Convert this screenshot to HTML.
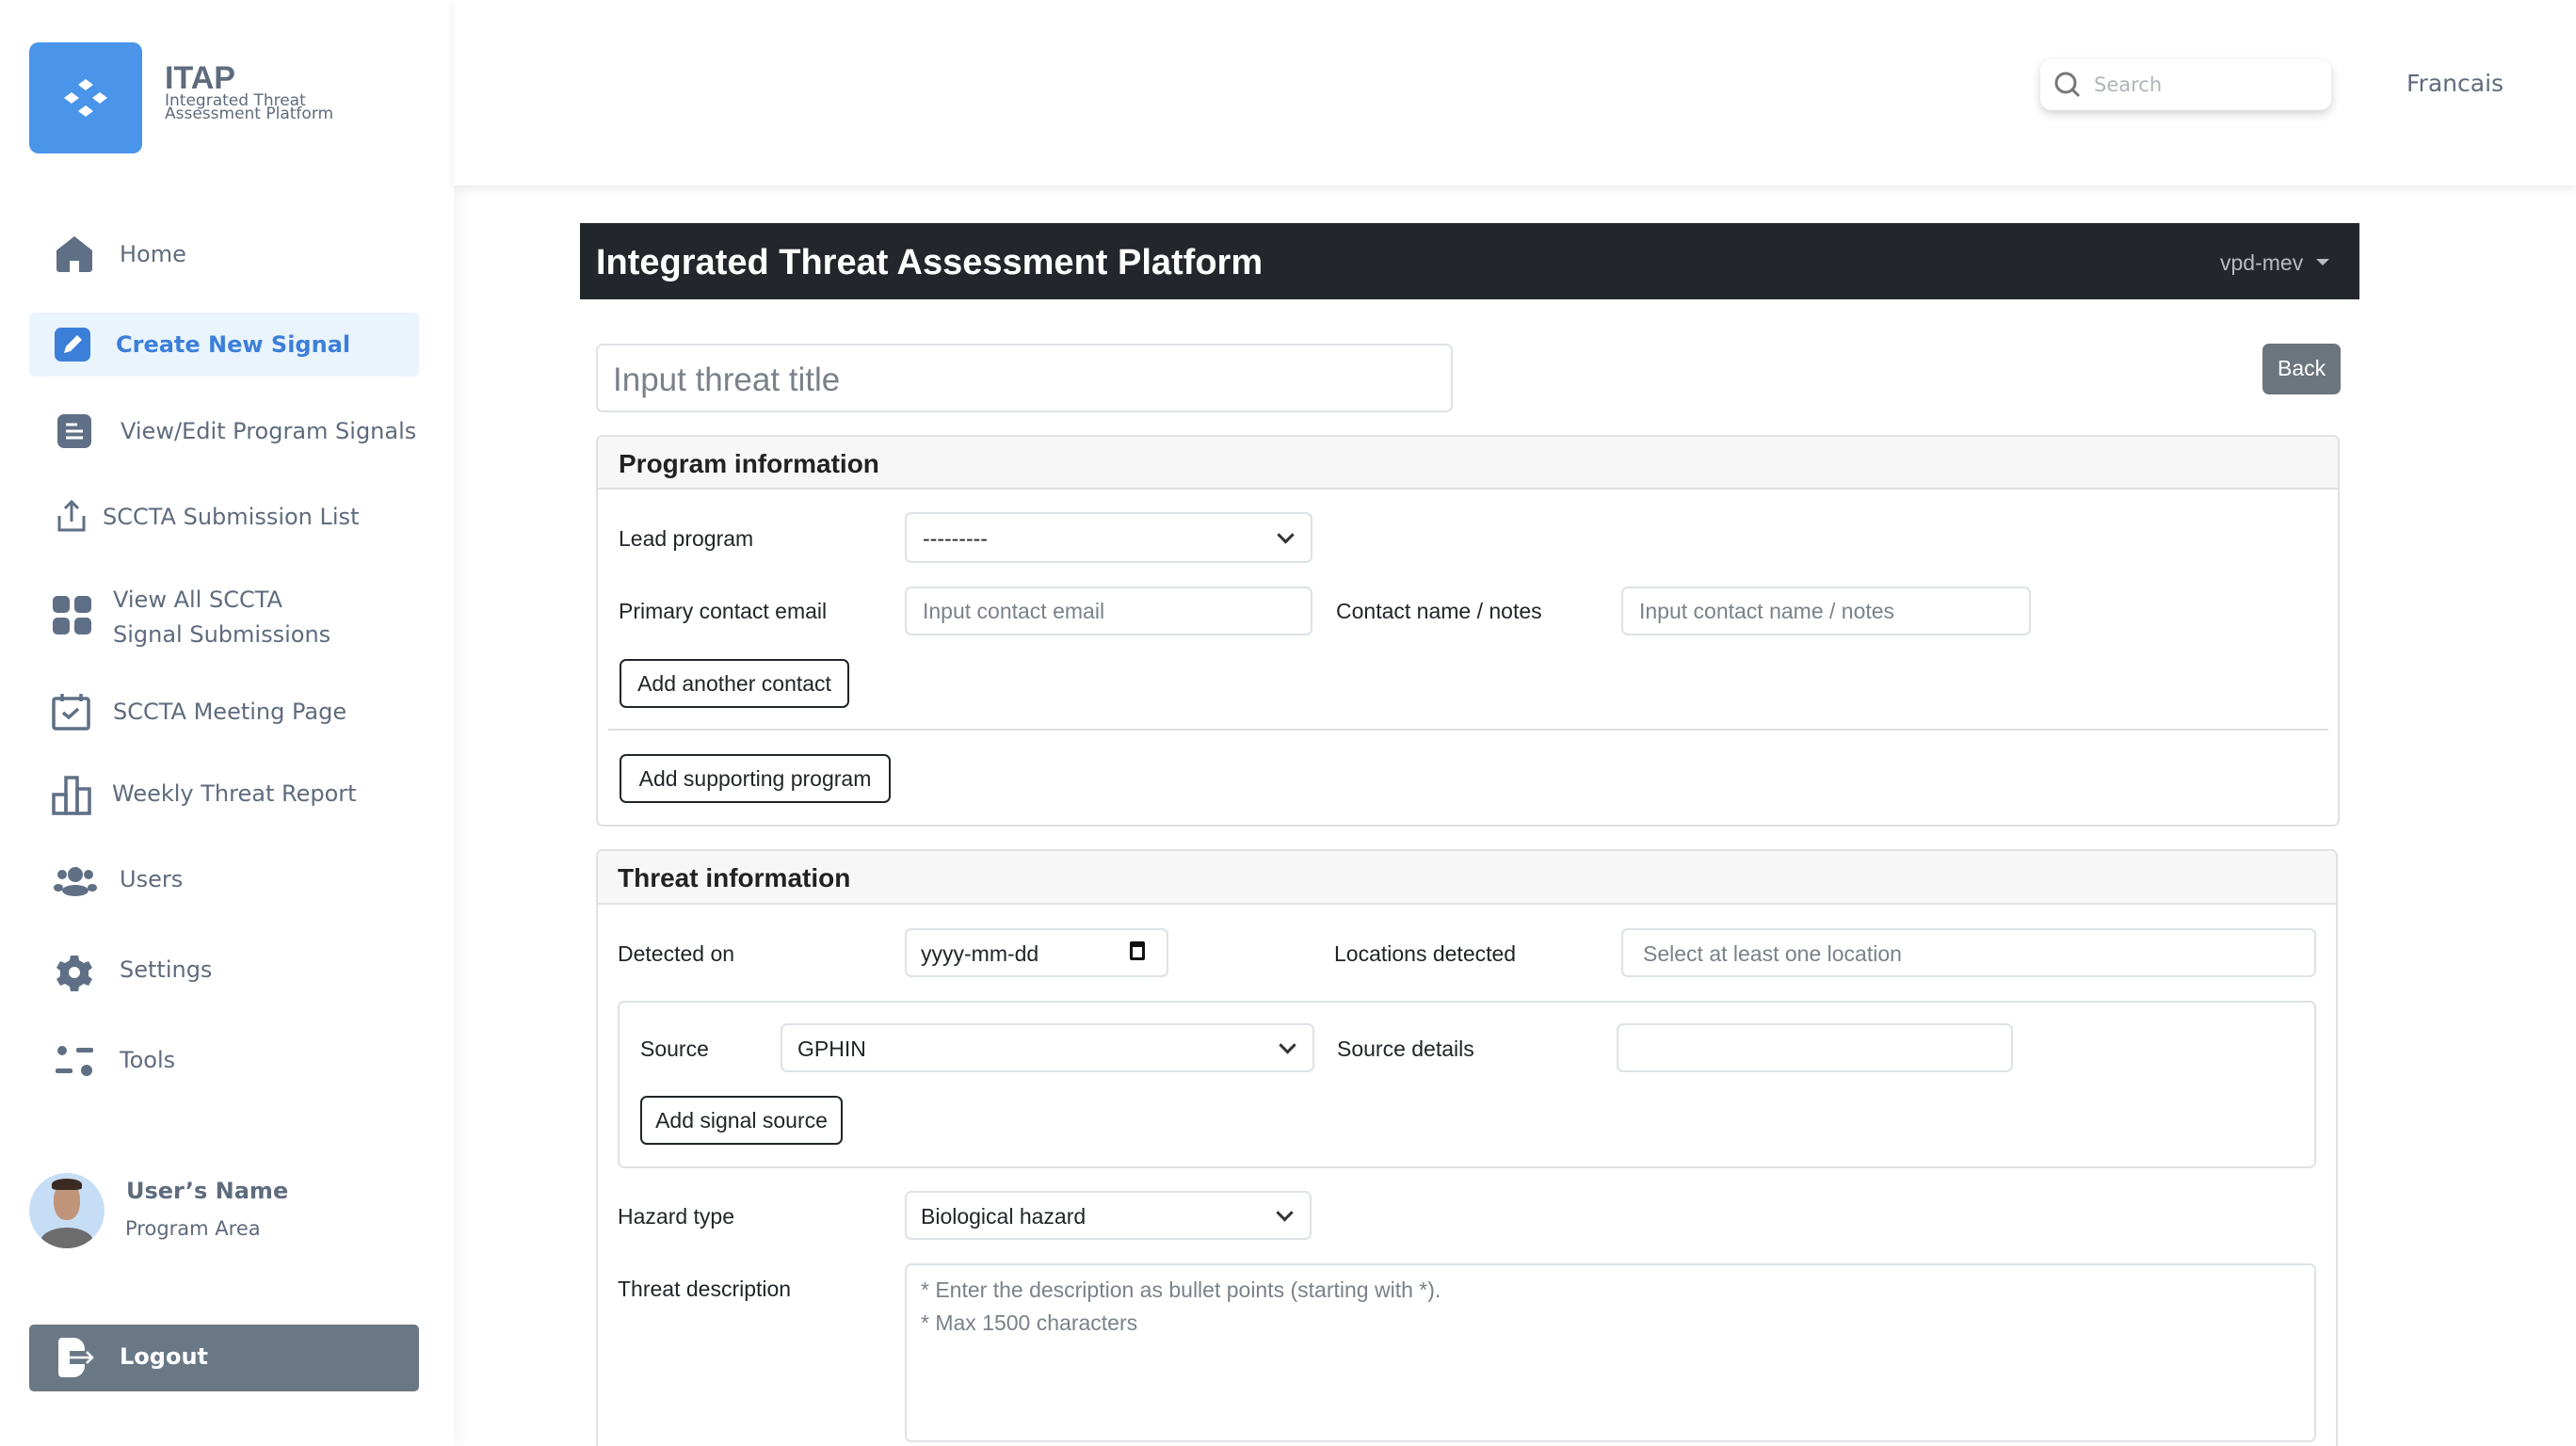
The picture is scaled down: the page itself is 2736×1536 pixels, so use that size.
<!DOCTYPE html>
<html style="width:2736px;height:1536px;overflow:hidden"><head><meta charset="utf-8"><style>
*{box-sizing:border-box;margin:0;padding:0}
body{width:2736px;height:1536px;position:relative;background:#fff;font-family:"Liberation Sans",sans-serif;overflow:hidden}
.a{position:absolute}
.side{left:0;top:0;width:482px;height:1536px;background:#fff;box-shadow:4px 0 18px rgba(0,0,0,.05)}
.nav{font-family:"DejaVu Sans","Liberation Sans",sans-serif;color:#5f6b7d;font-size:24px;white-space:nowrap}
.ic{fill:#5f6f85}
.f{font-family:"Liberation Sans Narrow","Liberation Sans",sans-serif;color:#212529;font-size:23px;white-space:nowrap}
.inp{border:2px solid #dee2e6;border-radius:7px;background:#fff}
.ph{color:#7b8189}
.btn{border:2px solid #212529;border-radius:7px;background:#fff;display:flex;align-items:center;justify-content:center}
.chev{position:absolute;right:20px;top:50%;width:13px;height:13px;border-right:3px solid #333;border-bottom:3px solid #333;transform:translateY(-70%) rotate(45deg)}
svg{display:block}
</style></head><body>
<div class="a side"></div>
<!-- logo -->
<div class="a" style="left:31px;top:45px;width:120px;height:118px;background:#4a94ea;border-radius:10px"></div>
<svg class="a" style="left:67px;top:81px" width="48" height="48" viewBox="0 0 48 48"><g fill="#fff"><path d="M24 3l8 6-8 6-8-6z"/><path d="M9 17l8 6-8 6-8-6z"/><path d="M39 17l8 6-8 6-8-6z"/><path d="M24 31l8 6-8 6-8-6z"/></g></svg>
<div class="a" style="left:175px;top:64px;font-size:34px;font-weight:bold;color:#5f6b7d;font-family:'Liberation Sans',sans-serif">ITAP</div>
<div class="a nav" style="left:175px;top:100px;font-size:17px;line-height:14px;color:#5f6b7d">Integrated Threat<br>Assessment Platform</div>
<!-- nav -->
<svg class="a" style="left:58px;top:250px" width="42" height="40" viewBox="0 0 42 40"><path class="ic" d="M21 1L2 16v20a3 3 0 003 3h11V27h10v12h11a3 3 0 003-3V16z"/></svg>
<div class="a nav" style="left:127px;top:256px">Home</div>
<div class="a" style="left:31px;top:332px;width:414px;height:68px;background:#eaf4fd;border-radius:6px"></div>
<div class="a" style="left:58px;top:348px;width:38px;height:36px;background:#3b7fd9;border-radius:7px"></div>
<svg class="a" style="left:64px;top:353px" width="26" height="26" viewBox="0 0 26 26"><path d="M4 22l2-7 12-12 5 5-12 12z" fill="#fff"/></svg>
<div class="a nav" style="left:123px;top:352px;color:#3b7fd9;font-weight:bold">Create New Signal</div>
<div class="a" style="left:61px;top:440px;width:36px;height:36px;background:#5f6f85;border-radius:7px"></div>
<svg class="a" style="left:61px;top:440px" width="36" height="36"><g stroke="#fff" stroke-width="3"><path d="M9 11h12M9 18h18M9 25h18"/></g></svg>
<div class="a nav" style="left:128px;top:444px">View/Edit Program Signals</div>
<svg class="a" style="left:61px;top:530px" width="30" height="36" viewBox="0 0 30 36"><g stroke="#5f6f85" stroke-width="3" fill="none"><path d="M15 24V3M8 10l7-7 7 7M2 18v15h26V18"/></g></svg>
<div class="a nav" style="left:109px;top:535px">SCCTA Submission List</div>
<svg class="a" style="left:56px;top:633px" width="42" height="42"><g class="ic"><rect x="0" y="0" width="18" height="18" rx="5"/><rect x="23" y="0" width="18" height="18" rx="5"/><rect x="0" y="23" width="18" height="18" rx="5"/><rect x="23" y="23" width="18" height="18" rx="5"/></g></svg>
<div class="a nav" style="left:120px;top:619px;line-height:37px">View All SCCTA<br>Signal Submissions</div>
<svg class="a" style="left:55px;top:735px" width="42" height="42" viewBox="0 0 42 42"><g stroke="#5f6f85" stroke-width="3.5" fill="none"><rect x="2" y="7" width="37" height="32" rx="2"/><path d="M12 22l6 5 10-9"/><path d="M11 2v8M31 2v8"/></g></svg>
<div class="a nav" style="left:120px;top:742px">SCCTA Meeting Page</div>
<svg class="a" style="left:55px;top:824px" width="42" height="42" viewBox="0 0 42 42"><g stroke="#5f6f85" stroke-width="3.5" fill="none"><rect x="2" y="20" width="13" height="20"/><rect x="15" y="2" width="12" height="38"/><rect x="27" y="14" width="13" height="26"/></g></svg>
<div class="a nav" style="left:119px;top:829px">Weekly Threat Report</div>
<svg class="a" style="left:57px;top:920px" width="46" height="32" viewBox="0 0 46 32"><g class="ic"><circle cx="23" cy="9" r="8"/><ellipse cx="23" cy="26" rx="14" ry="6"/><circle cx="9" cy="9" r="5"/><circle cx="37" cy="9" r="5"/><ellipse cx="5" cy="23" rx="5" ry="4"/><ellipse cx="41" cy="23" rx="5" ry="4"/></g></svg>
<div class="a nav" style="left:127px;top:920px">Users</div>
<svg class="a" style="left:59px;top:1013px" width="40" height="40" viewBox="0 0 40 40"><path class="ic" fill-rule="evenodd" d="M16 2h8l1 5 5 3 5-2 4 7-4 3v6l4 3-4 7-5-2-5 3-1 5h-8l-1-5-5-3-5 2-4-7 4-3v-6L1 15l4-7 5 2 5-3zM20 14a6 6 0 100 12 6 6 0 000-12z"/></svg>
<div class="a nav" style="left:127px;top:1016px">Settings</div>
<svg class="a" style="left:59px;top:1111px" width="42" height="34"><g class="ic"><circle cx="7" cy="5" r="5"/><rect x="22" y="2" width="18" height="5" rx="2"/><rect x="0" y="24" width="18" height="5" rx="2"/><circle cx="33" cy="26" r="6"/></g></svg>
<div class="a nav" style="left:127px;top:1112px">Tools</div>
<!-- user -->
<div class="a" style="left:31px;top:1246px;width:80px;height:80px;border-radius:50%;background:#c6def5;overflow:hidden">
<div class="a" style="left:12px;top:58px;width:56px;height:30px;border-radius:50% 50% 0 0;background:#6c6c6c"></div>
<div class="a" style="left:26px;top:10px;width:28px;height:40px;border-radius:45%;background:#c09478"></div>
<div class="a" style="left:24px;top:6px;width:32px;height:12px;border-radius:50% 50% 20% 20%;background:#3a2a22"></div>
</div>
<div class="a nav" style="left:134px;top:1251px;font-weight:bold;color:#5f6b7d">User’s Name</div>
<div class="a nav" style="left:133px;top:1293px;font-size:21px">Program Area</div>
<div class="a" style="left:31px;top:1407px;width:414px;height:71px;background:#6a7886;border-radius:5px"></div>
<svg class="a" style="left:58px;top:1419px" width="46" height="46" viewBox="0 0 46 46"><path d="M4 6a4 4 0 014-4h12a12 12 0 0112 12v2H16v14h16v2a12 12 0 01-12 12H8a4 4 0 01-4-4z" fill="#fff"/><path d="M16 23h24M34 17l6 6-6 6" stroke="#fff" stroke-width="2.5" fill="none"/></svg>
<div class="a nav" style="left:127px;top:1427px;color:#fff;font-weight:bold">Logout</div>
<!-- topbar -->
<div class="a" style="left:482px;top:0;width:2254px;height:197px;background:#fff;box-shadow:0 4px 10px rgba(0,0,0,.08)"></div>
<div class="a" style="left:2167px;top:63px;width:309px;height:54px;background:#fff;border-radius:12px;box-shadow:0 4px 10px rgba(0,0,0,.18)"></div>
<svg class="a" style="left:2180px;top:74px" width="32" height="32" viewBox="0 0 32 32"><circle cx="14" cy="14" r="10" stroke="#777" stroke-width="3" fill="none"/><path d="M21 21l7 7" stroke="#777" stroke-width="3"/></svg>
<div class="a nav" style="left:2224px;top:78px;font-size:21px;color:#b0b4ba">Search</div>
<div class="a nav" style="left:2556px;top:74px;font-size:25px">Francais</div>
<!-- dark bar -->
<div class="a" style="left:616px;top:237px;width:1890px;height:81px;background:#23272c"></div>
<div class="a f" style="left:633px;top:258px;color:#fff;font-size:38px;font-weight:bold">Integrated Threat Assessment Platform</div>
<div class="a f" style="left:2358px;top:266px;color:#b7bcc2;font-size:23px">vpd-mev</div>
<div class="a" style="left:2460px;top:275px;border-left:7px solid transparent;border-right:7px solid transparent;border-top:7px solid #b7bcc2"></div>
<!-- title input -->
<div class="a inp" style="left:633px;top:365px;width:910px;height:73px"></div>
<div class="a f ph" style="left:651px;top:384px;font-size:35px">Input threat title</div>
<div class="a" style="left:2403px;top:365px;width:83px;height:54px;background:#6c757d;border-radius:7px"></div>
<div class="a f" style="left:2419px;top:378px;color:#fff">Back</div>
<!-- program card -->
<div class="a" style="left:633px;top:462px;width:1852px;height:416px;border:2px solid #dfe1e4;border-radius:7px"></div>
<div class="a" style="left:635px;top:464px;width:1848px;height:56px;background:#f7f7f7;border-bottom:2px solid #dfe1e4;border-radius:6px 6px 0 0"></div>
<div class="a f" style="left:657px;top:477px;font-size:28px;font-weight:bold;color:#222">Program information</div>
<div class="a f" style="left:657px;top:559px">Lead program</div>
<div class="a inp" style="left:961px;top:544px;width:433px;height:54px"><div class="chev"></div></div>
<div class="a f" style="left:980px;top:559px">---------</div>
<div class="a f" style="left:657px;top:636px">Primary contact email</div>
<div class="a inp" style="left:961px;top:623px;width:433px;height:52px"></div>
<div class="a f ph" style="left:980px;top:636px">Input contact email</div>
<div class="a f" style="left:1419px;top:636px">Contact name / notes</div>
<div class="a inp" style="left:1722px;top:623px;width:435px;height:52px"></div>
<div class="a f ph" style="left:1741px;top:636px">Input contact name / notes</div>
<div class="a btn f" style="left:658px;top:700px;width:244px;height:52px">Add another contact</div>
<div class="a" style="left:646px;top:774px;width:1827px;height:2px;background:#dcdee1"></div>
<div class="a btn f" style="left:658px;top:801px;width:288px;height:52px">Add supporting program</div>
<!-- threat card -->
<div class="a" style="left:633px;top:902px;width:1850px;height:700px;border:2px solid #dfe1e4;border-radius:7px"></div>
<div class="a" style="left:635px;top:904px;width:1846px;height:57px;background:#f7f7f7;border-bottom:2px solid #dfe1e4;border-radius:6px 6px 0 0"></div>
<div class="a f" style="left:656px;top:917px;font-size:28px;font-weight:bold;color:#222">Threat information</div>
<div class="a f" style="left:656px;top:1000px">Detected on</div>
<div class="a inp" style="left:961px;top:986px;width:280px;height:52px"></div>
<div class="a f" style="left:978px;top:1000px">yyyy-mm-dd</div>
<div class="a" style="left:1200px;top:1000px;width:16px;height:20px;border:3px solid #111;border-top-width:6px;border-radius:2px"></div>
<div class="a f" style="left:1417px;top:1000px">Locations detected</div>
<div class="a inp" style="left:1722px;top:986px;width:738px;height:52px"></div>
<div class="a f ph" style="left:1745px;top:1000px">Select at least one location</div>
<div class="a" style="left:656px;top:1063px;width:1804px;height:178px;border:2px solid #dfe1e4;border-radius:7px"></div>
<div class="a f" style="left:680px;top:1101px">Source</div>
<div class="a inp" style="left:829px;top:1087px;width:567px;height:52px"><div class="chev"></div></div>
<div class="a f" style="left:847px;top:1101px">GPHIN</div>
<div class="a f" style="left:1420px;top:1101px">Source details</div>
<div class="a inp" style="left:1717px;top:1087px;width:421px;height:52px"></div>
<div class="a btn f" style="left:680px;top:1164px;width:215px;height:52px">Add signal source</div>
<div class="a f" style="left:656px;top:1279px">Hazard type</div>
<div class="a inp" style="left:961px;top:1265px;width:432px;height:52px"><div class="chev"></div></div>
<div class="a f" style="left:978px;top:1279px">Biological hazard</div>
<div class="a f" style="left:656px;top:1356px">Threat description</div>
<div class="a inp" style="left:961px;top:1342px;width:1499px;height:190px"></div>
<div class="a f ph" style="left:978px;top:1353px;line-height:35px">* Enter the description as bullet points (starting with *).<br>* Max 1500 characters</div>
</body></html>
